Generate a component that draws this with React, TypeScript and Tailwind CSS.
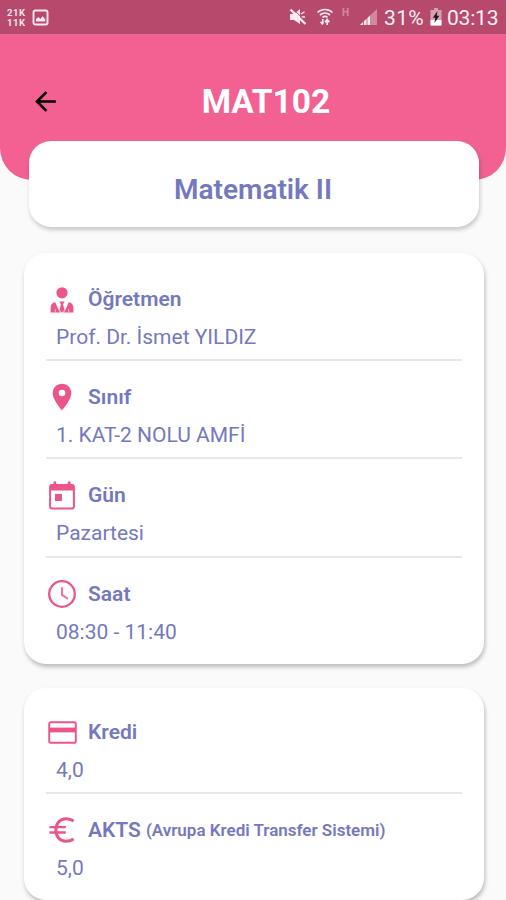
import type { ReactNode } from "react";
import { MdArrowBack, MdPlace } from "react-icons/md";

function TeacherIcon() {
  return (
    <svg className="mt-[2px]" width="24" height="26" viewBox="0 0 24 26" fill="currentColor">
      <circle cx="12" cy="5.8" r="5.6" />
      <path d="M5.3 15.2 9.6 25.4H.6v-4.6c0-3.2 1.7-5.2 4.7-5.6ZM18.7 15.2 14.4 25.4h9v-4.6c0-3.2-1.7-5.2-4.7-5.6ZM9.4 14.6h5.2l-1.5 2.7 1.2 5.2-2.3 2.9-2.3-2.9 1.2-5.2Z" />
      <path d="M8 22.5h8v2.9H8Z" opacity=".55" />
      <path d="M4.8 22h1v3.2h-1ZM18.2 22h1v3.2h-1Z" fill="#fff" opacity=".6" />
    </svg>
  );
}

function CalendarIcon() {
  return (
    <svg width="26" height="29" viewBox="0 0 26 29" fill="none" stroke="currentColor">
      <rect x="1.1" y="4" width="23.8" height="23.6" rx="2" strokeWidth="2" />
      <path d="M1 5.2a2 2 0 0 1 2-2h20a2 2 0 0 1 2 2v4.3H1Z" fill="currentColor" stroke="none" />
      <path d="M5.8 1.6v3M20.2 1.6v3" strokeWidth="2.8" strokeLinecap="round" />
      <path d="M6 13h7v7H6Z" fill="currentColor" stroke="none" />
    </svg>
  );
}

function ClockIcon() {
  return (
    <svg width="28" height="28" viewBox="0 0 28 28" fill="none" stroke="currentColor">
      <circle cx="14" cy="14" r="12.8" strokeWidth="2.3" />
      <path d="M14 7.2V15l6 3.8" strokeWidth="2.1" opacity=".8" />
    </svg>
  );
}

function CardIcon() {
  return (
    <svg width="29" height="23" viewBox="0 0 29 23" fill="none" stroke="currentColor">
      <rect x="1.2" y="1.2" width="26.6" height="20.6" rx="1.6" strokeWidth="1.9" />
      <path d="M1 9h27" strokeWidth="4.8" />
    </svg>
  );
}

function EuroIcon() {
  return (
    <svg width="26" height="26" viewBox="0 0 26 26" fill="none" stroke="currentColor" strokeWidth="3">
      <path d="M24.6 4C21.8 2 19.8 1.7 17 1.7 10.6 1.7 6.9 6.7 6.9 13S10.6 24.3 17 24.3c2.8 0 4.8-.4 7.6-2.3" />
      <path d="M.5 10.1h16.3M.5 15.5h16.3" strokeWidth="2.3" />
    </svg>
  );
}

function StatusBar() {
  return (
    <div className="flex h-[34px] items-center bg-[#b6496c] text-[#fdeaf1]">
      <div className="ml-[7px] grid w-[20px] gap-[1px] text-[9.5px] leading-[9px] font-semibold tracking-[0.6px] whitespace-nowrap">
        <div className="h-[9px] overflow-hidden">21K</div>
        <div className="h-[9px] overflow-hidden">11K</div>
      </div>
      <svg className="ml-[5px]" width="17" height="17" viewBox="0 0 17 17">
        <rect x="1.5" y="1.5" width="14" height="14" rx="1.8" fill="none" stroke="currentColor" strokeWidth="1.9" />
        <path d="M4 12.6V10l2.4-2 2 2 2.2-2.7 2.6 3v2.3Z" fill="currentColor" />
      </svg>
      <svg className="ml-[240px]" width="18" height="18" viewBox="0 0 18 18" fill="currentColor">
        <path d="M1 6h4L11 1v15l-6-4H1Z" />
        <path d="m12 6 3.5-2.2M12.5 9H16" stroke="currentColor" strokeWidth="1.4" />
        <path d="M1.5 1.5 16.5 16" stroke="currentColor" strokeWidth="2.4" />
        <path d="M4 1 17.5 14.2" stroke="#b6496c" strokeWidth="1" />
      </svg>
      <svg className="ml-[9px]" width="18" height="18" viewBox="0 0 18 18" fill="none" stroke="currentColor" strokeWidth="1.7">
        <path d="M1.5 4.5C5.8.5 12.2.5 16.5 4.5M4 7c3-2.7 7-2.7 10 0M6.5 9.3c1.6-1.3 3.4-1.3 5 0" />
        <path d="M6.8 11v5M4.6 13.8l2.2 2.6M11.2 17v-5M9 14.2l2.2-2.6 2.2 2.6" />
      </svg>
      <span className="mb-[9px] ml-[8px] w-[9px] text-[10px] leading-none font-bold opacity-40">H</span>
      <svg className="ml-[8px]" width="19" height="18" viewBox="0 0 19 18" fill="currentColor">
        <path d="M1 17 18 1v16Z" opacity=".4" />
        <path d="M1 17 11 7.6V17Z" />
        <path d="M4.5 12v5M8 9v8" stroke="#b6496c" strokeWidth=".8" />
      </svg>
      <span className="mt-[2px] ml-[6px] w-[42px] text-[21px] leading-none tracking-[0.35px] text-[#fff1f6]">31%</span>
      <svg className="ml-[4px]" width="12" height="18" viewBox="0 0 12 18">
        <path d="M4 0h4v2h3.5v15.5H.5V2H4Z" fill="#d5a2b4" />
        <path d="M.5 12h11v5.5H.5Z" fill="#fff" />
        <path d="M7.5 3 2.8 9.8h2.5L4.5 15l4.8-7.2H6.8Z" fill="#21161a" />
      </svg>
      <span className="mt-[2px] ml-[5px] text-[21px] leading-none tracking-[-0.2px] text-[#fff1f6]">03:13</span>
    </div>
  );
}

type RowProps = { icon: ReactNode; title: string; note?: string; value: string; last?: boolean };

function InfoRow({ icon, title, note, value, last }: RowProps) {
  return (
    <div className={last ? "h-[98.4px] pt-[21px]" : "h-[98.4px] border-b-2 border-[#e7e7e7] pt-[21px]"}>
      <div className="flex h-[30px] items-center">
        <div className="flex w-[32px] justify-center text-[#ec5588]">{icon}</div>
        <div className="ml-[10px] flex items-center whitespace-nowrap">
          <span className="text-[21px] leading-[30px] font-semibold">{title}</span>
          {note && <span className="ml-[5px] text-[17px] leading-[30px] font-semibold">{note}</span>}
        </div>
      </div>
      <div className="mt-[8px] ml-[10px] text-[21px] leading-[30px]">{value}</div>
    </div>
  );
}

export default function App() {
  return (
    <div className="h-[900px] w-[506px] overflow-hidden bg-[#fafafa] font-['Roboto',sans-serif] text-[#7479be]">
      <header className="h-[180px] rounded-b-[32px] bg-[#f26192]">
        <StatusBar />
        <div className="grid h-[107px] grid-cols-[84px_1fr_58px] items-center pt-[27px]">
          <MdArrowBack className="ml-[30px] text-black" size={31} />
          <h1 className="pt-[2px] text-center text-[33.5px] leading-none font-bold text-white">MAT102</h1>
        </div>
        <div className="mr-[27px] ml-[29px] flex h-[86px] items-center justify-center rounded-[22px] bg-white pt-[11px] pr-[2px] shadow-[1px_3px_4px_rgba(0,0,0,0.2)]">
          <h2 className="text-[28px] leading-none font-semibold">Matematik II</h2>
        </div>
      </header>
      <main className="mr-[22px] ml-[24px] flex flex-col gap-[24px] pt-[73px]">
        <section className="h-[411px] rounded-[22px] bg-white pt-[9.6px] pr-[22px] pl-[22px] shadow-[1px_3px_4px_rgba(0,0,0,0.25)]">
          <InfoRow icon={<TeacherIcon />} title="Öğretmen" value="Prof. Dr. İsmet YILDIZ" />
          <InfoRow icon={<MdPlace size={34} />} title="Sınıf" value="1. KAT-2 NOLU AMFİ" />
          <InfoRow icon={<CalendarIcon />} title="Gün" value="Pazartesi" />
          <InfoRow icon={<ClockIcon />} title="Saat" value="08:30 - 11:40" last />
        </section>
        <section className="h-[212px] rounded-[22px] bg-white pt-[8px] pr-[22px] pl-[22px] shadow-[1px_3px_4px_rgba(0,0,0,0.25)]">
          <InfoRow icon={<CardIcon />} title="Kredi" value="4,0" />
          <InfoRow icon={<EuroIcon />} title="AKTS" note="(Avrupa Kredi Transfer Sistemi)" value="5,0" last />
        </section>
      </main>
    </div>
  );
}
